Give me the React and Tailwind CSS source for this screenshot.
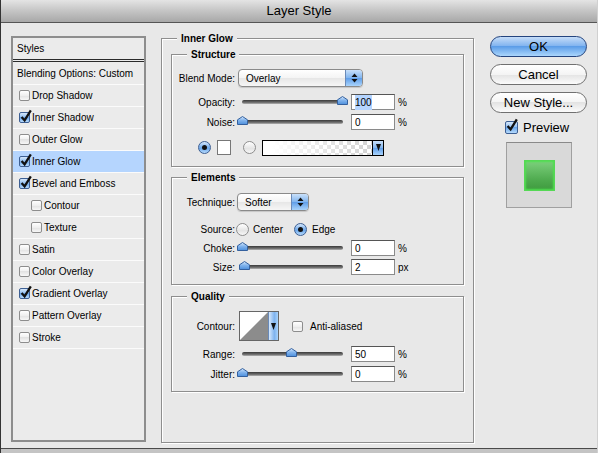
import React from 'react';

const styleRows = [
    { name: 'Drop Shadow' },
    { name: 'Inner Shadow', on: true },
    { name: 'Outer Glow' },
    { name: 'Inner Glow', on: true, active: true },
    { name: 'Bevel and Emboss', on: true },
    { name: 'Contour', sub: true },
    { name: 'Texture', sub: true },
    { name: 'Satin' },
    { name: 'Color Overlay' },
    { name: 'Gradient Overlay', on: true },
    { name: 'Pattern Overlay' },
    { name: 'Stroke' },
];

const CheckBox = ({ on, big }) => (
    <span
        className={`relative block shrink-0 rounded-[2px] border ${big ? 'h-[13px] w-[13px]' : 'h-[11px] w-[11px]'} ${
            on
                ? 'border-[#3d5f93] bg-[linear-gradient(#d6e8fc,#8dbcef_50%,#6aa6ea_50%,#b6dafc)]'
                : 'border-[#8d8d8d] bg-[linear-gradient(#ffffff,#efefef_50%,#e2e2e2_50%,#f7f7f7)]'
        }`}
    >
        {on && (
            <svg viewBox="0 0 12 13" className="absolute -top-[3px] left-0 h-[13px] w-[12px] overflow-visible">
                <path d="M1.6 7 L4.6 10.4 L10.8 0.4" fill="none" stroke="#111" strokeWidth="2.3" />
            </svg>
        )}
    </span>
);

const Radio = ({ on }) =>
    on ? (
        <span className="flex h-[13px] w-[13px] shrink-0 items-center justify-center rounded-full border border-[#3d5f93] bg-[linear-gradient(#d6e8fc,#6aa6ea_55%,#b6dafc)]">
            <span className="block h-[5px] w-[5px] rounded-full bg-[#111]" />
        </span>
    ) : (
        <span className="block h-[13px] w-[13px] shrink-0 rounded-full border border-[#8d8d8d] bg-[linear-gradient(#ffffff,#e4e4e4_60%,#f8f8f8)]" />
    );

const DownArrow = () => (
    <svg width="5" height="7" viewBox="0 0 5 7">
        <path d="M0 0 L5 0 L2.5 7 Z" fill="#111" />
    </svg>
);

const Slider = ({ at }) => (
    <div className="relative ml-[7px] h-[12px] w-[101px]">
        <div className="mt-[4px] h-[4px] rounded-full bg-[linear-gradient(#3a3a3a,#6e6e6e_60%,#b4b4b4)]" />
        {/* thumb */}
        <svg width="11" height="9" viewBox="0 0 11 9" className="absolute top-0" style={{ left: at - 5 }}>
            <path d="M5.5 0.5 L10.5 3.8 L10.5 8.5 L0.5 8.5 L0.5 3.8 Z" fill="url(#thumbFill)" stroke="#34609e" />
        </svg>
    </div>
);

const Field = ({ children, sel }) => (
    <div className="ml-[8px] flex h-[16px] w-[44px] items-center border border-[#8a8a8a] border-t-[#555] bg-white pl-[3px]">
        {sel ? <span className="bg-[#b5d5ff]">{children}</span> : children}
    </div>
);

const SliderRow = ({ label, at, value, unit = '%', sel, className }) => (
    <div className={`flex h-[16px] items-center ${className}`}>
        <div className="w-[63px] text-right">{label}</div>
        <Slider at={at} />
        <Field sel={sel}>{value}</Field>
        <span className="ml-[3px]">{unit}</span>
    </div>
);

const Popup = ({ text, className }) => (
    <div
        className={`flex h-[18px] items-center rounded-[4px] border border-[#8a8a8a] bg-[linear-gradient(#ffffff,#f4f4f4_50%,#e6e6e6_50%,#f6f6f6)] shadow-[0_1px_1px_rgba(0,0,0,0.15)] ${className}`}
    >
        <span className="flex-1 pl-[7px]">{text}</span>
        <span className="flex h-full w-[17px] items-center justify-center rounded-r-[3px] border-l border-[#6a8ab8] bg-[linear-gradient(#c9e0fa,#80b4ee_50%,#5d9ce8_50%,#a9d3fb)]">
            <svg width="7" height="10" viewBox="0 0 7 10">
                <path d="M3.5 0.5 L6.5 4 L0.5 4 Z M0.5 6 L6.5 6 L3.5 9.5 Z" fill="#111" />
            </svg>
        </span>
    </div>
);

const Group = ({ title, className, children }) => (
    <div
        className={`border border-[#8e8e8e] shadow-[inset_1px_1px_0_#fff,1px_1px_0_#fff] ${className}`}
    >
        <div className="-mt-[7px] ml-[15px] w-fit bg-[#e8e8e8] px-[4px] font-bold leading-[13px]">{title}</div>
        {children}
    </div>
);

const Button = ({ children, primary, className }) => (
    <div
        className={`flex h-[21px] w-[97px] items-center justify-center rounded-full border text-[13px] ${
            primary
                ? 'border-[#24447e] bg-[linear-gradient(#c6ddf8,#7db1ef_50%,#5c9de8_50%,#abd6fc)]'
                : 'border-[#707070] bg-[linear-gradient(#ffffff,#f4f4f4_50%,#e3e3e3_50%,#fbfbfb)]'
        } ${className}`}
    >
        {children}
    </div>
);

export default function App() {
    return (
        <div className="flex h-[453px] w-[598px] flex-col overflow-hidden border-l border-r border-l-[#333] border-r-[#d0d0d0] bg-[#e8e8e8] font-['Liberation_Sans',Arial,sans-serif] text-[10px] text-black">
            <svg width="0" height="0" className="absolute">
                <defs>
                    <linearGradient id="thumbFill" x1="0" y1="0" x2="0" y2="1">
                        <stop offset="0" stopColor="#d2e6fb" />
                        <stop offset="0.5" stopColor="#7fb2ec" />
                        <stop offset="1" stopColor="#4d8fdc" />
                    </linearGradient>
                </defs>
            </svg>

            {/* Title bar */}
            <div className="flex h-[23px] shrink-0 items-center justify-center border-b border-[#555] bg-[linear-gradient(#e4e4e4,#c4c4c4_50%,#a8a8a8)] text-[13px]">
                Layer Style
            </div>

            <div className="flex flex-1 items-start pl-[10px] pt-[13px]">
                {/* Styles list */}
                <div className="h-[406px] w-[135px] border-2 border-[#8d8d8d] bg-[#ebebeb]">
                    <div className="flex h-[24px] items-center border-b-[3px] border-double border-[#2a2a2a] pl-[4px]">Styles</div>
                    <div className="flex h-[23px] items-center border-b border-[#fbfbfb] pl-[4px]">Blending Options: Custom</div>
                    {styleRows.map((r) => (
                        <div
                            key={r.name}
                            className={`flex h-[22px] items-center border-b border-[#fbfbfb] ${r.sub ? 'pl-[18px]' : 'pl-[6px]'} ${
                                r.active ? 'bg-[#b5d5fe]' : ''
                            }`}
                        >
                            <CheckBox on={r.on} />
                            <span className="ml-[2px]">{r.name}</span>
                        </div>
                    ))}
                </div>

                {/* Inner Glow panel */}
                <Group title="Inner Glow" className="ml-[15px] mt-[2px] h-[405px] w-[313px]">
                    <Group title="Structure" className="mx-[9px] mt-[9px] pb-[11px]">
                        <div className="mt-[8px] flex items-center">
                            <div className="w-[63px] text-right">Blend Mode:</div>
                            <Popup text="Overlay" className="ml-[3px] w-[125px]" />
                        </div>
                        <SliderRow label="Opacity:" at={100} value="100" sel className="mt-[7px]" />
                        <SliderRow label="Noise:" at={0} value="0" className="mt-[4px]" />
                        <div className="ml-[26px] mt-[10px] flex h-[15px] items-center">
                            <Radio on />
                            <div className="ml-[6px] h-[15px] w-[14px] border border-[#777] bg-white" />
                            <div className="ml-[12px]">
                                <Radio />
                            </div>
                            <div className="ml-[6px] flex h-[16px] w-[122px] border border-black">
                                <div className="flex-1 [background-image:linear-gradient(to_right,#fff_8%,rgba(255,255,255,0)),repeating-conic-gradient(#d2d2d2_0%_25%,#fff_0%_50%)] [background-size:100%_100%,8px_8px]" />
                                <div className="flex w-[11px] items-center justify-center border-l border-black bg-[linear-gradient(#c9e0fa,#80b4ee_50%,#5d9ce8_50%,#a9d3fb)]">
                                    <DownArrow />
                                </div>
                            </div>
                        </div>
                    </Group>

                    <Group title="Elements" className="mx-[9px] mt-[10px] pb-[9px]">
                        <div className="mt-[9px] flex items-center">
                            <div className="w-[63px] text-right">Technique:</div>
                            <Popup text="Softer" className="ml-[2px] w-[72px]" />
                        </div>
                        <div className="mt-[12px] flex h-[13px] items-center">
                            <div className="w-[63px] text-right">Source:</div>
                            <div className="ml-[1px]">
                                <Radio />
                            </div>
                            <span className="ml-[4px]">Center</span>
                            <div className="ml-[11px]">
                                <Radio on />
                            </div>
                            <span className="ml-[5px]">Edge</span>
                        </div>
                        <SliderRow label="Choke:" at={0} value="0" className="mt-[4px]" />
                        <SliderRow label="Size:" at={2} value="2" unit="px" className="mt-[3px]" />
                    </Group>

                    <Group title="Quality" className="mx-[9px] mt-[11px] pb-[9px]">
                        <div className="mt-[8px] flex h-[30px] items-center">
                            <div className="w-[63px] text-right">Contour:</div>
                            <div className="ml-[4px] flex h-[30px] w-[40px] border border-[#666]">
                                <svg width="28" height="28" viewBox="0 0 28 28" className="bg-white">
                                    <path d="M0 28 L28 0 L28 28 Z" fill="#8c8c8c" />
                                </svg>
                                <div className="flex flex-1 items-center justify-center border-l border-[#6a8ab8] bg-[linear-gradient(to_right,#d6e8fc,#7fb3ee_60%,#a9d3fb)]">
                                    <DownArrow />
                                </div>
                            </div>
                            <div className="ml-[13px] flex items-center">
                                <CheckBox />
                                <span className="ml-[7px]">Anti-aliased</span>
                            </div>
                        </div>
                        <SliderRow label="Range:" at={49} value="50" className="mt-[5px]" />
                        <SliderRow label="Jitter:" at={0} value="0" className="mt-[4px]" />
                    </Group>
                </Group>

                {/* Buttons and preview */}
                <div className="ml-[16px] flex w-[97px] flex-col">
                    <Button primary>OK</Button>
                    <Button className="mt-[7px]">Cancel</Button>
                    <Button className="mt-[7px]">New Style...</Button>
                    <div className="mt-[7px] flex h-[15px] items-center pl-[15px] text-[13px]">
                        <CheckBox on big />
                        <span className="ml-[5px]">Preview</span>
                    </div>
                    <div className="ml-[16px] mt-[7px] flex h-[66px] w-[66px] items-center justify-center border border-[#a0a0a0] border-t-[#8a8a8a] bg-[#d9d9d9]">
                        <div className="h-[31px] w-[31px] border border-[#55d855] bg-[linear-gradient(#7dd07d,#4fab4f_65%,#3f9a3f)] shadow-[inset_0_0_2px_1px_#4fe04f]" />
                    </div>
                </div>
            </div>

            <div className="h-[5px] shrink-0 border-t border-[#4a4a4a] bg-[#c4c4c4]" />
        </div>
    );
}
